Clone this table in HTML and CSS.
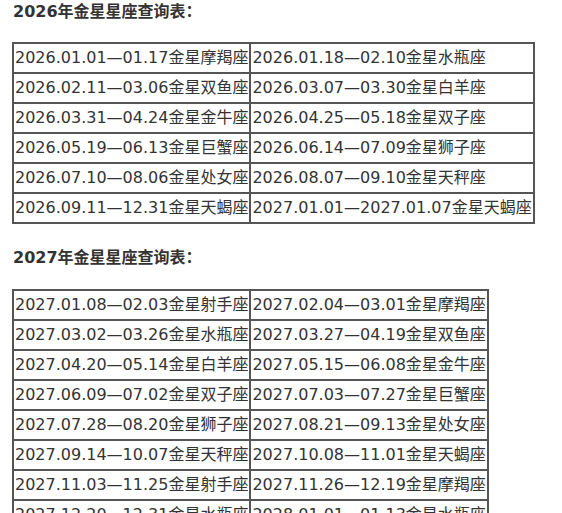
FILE: index.html
```html
<!DOCTYPE html>
<html lang="zh">
<head>
<meta charset="utf-8">
<link rel="stylesheet" href="styles.css">
</head>
<body>
<div class="page">
  <h3 class="title">2026年金星星座查询表：</h3>
  <table class="tbl">
    <tr><td>2026.01.01—01.17金星摩羯座</td><td>2026.01.18—02.10金星水瓶座</td></tr>
    <tr><td>2026.02.11—03.06金星双鱼座</td><td>2026.03.07—03.30金星白羊座</td></tr>
    <tr><td>2026.03.31—04.24金星金牛座</td><td>2026.04.25—05.18金星双子座</td></tr>
    <tr><td>2026.05.19—06.13金星巨蟹座</td><td>2026.06.14—07.09金星狮子座</td></tr>
    <tr><td>2026.07.10—08.06金星处女座</td><td>2026.08.07—09.10金星天秤座</td></tr>
    <tr><td>2026.09.11—12.31金星天蝎座</td><td>2027.01.01—2027.01.07金星天蝎座</td></tr>
  </table>
  <h3 class="title second">2027年金星星座查询表：</h3>
  <table class="tbl">
    <tr><td>2027.01.08—02.03金星射手座</td><td>2027.02.04—03.01金星摩羯座</td></tr>
    <tr><td>2027.03.02—03.26金星水瓶座</td><td>2027.03.27—04.19金星双鱼座</td></tr>
    <tr><td>2027.04.20—05.14金星白羊座</td><td>2027.05.15—06.08金星金牛座</td></tr>
    <tr><td>2027.06.09—07.02金星双子座</td><td>2027.07.03—07.27金星巨蟹座</td></tr>
    <tr><td>2027.07.28—08.20金星狮子座</td><td>2027.08.21—09.13金星处女座</td></tr>
    <tr><td>2027.09.14—10.07金星天秤座</td><td>2027.10.08—11.01金星天蝎座</td></tr>
    <tr><td>2027.11.03—11.25金星射手座</td><td>2027.11.26—12.19金星摩羯座</td></tr>
    <tr><td>2027.12.20—12.31金星水瓶座</td><td>2028.01.01—01.13金星水瓶座</td></tr>
  </table>
</div>
</body>
</html>
```
FILE: styles.css
```css
html, body {
  margin: 0;
  padding: 0;
  background: #fff;
}
body {
  font-family: "DejaVu Sans", "Noto Sans CJK SC", sans-serif;
  color: #333;
  font-size: 16px;
}
.page {
  padding: 0 12px;
}
.title {
  margin: 0 0 18px 1px;
  font-size: 16px;
  line-height: 24px;
  font-weight: bold;
  color: #333;
}
.title.second {
  margin-top: 22px;
  margin-bottom: 19px;
}
.tbl {
  border-collapse: collapse;
  border: 2px solid #555;
}
.tbl td {
  border: 2px solid #555;
  padding: 0 1px;
  white-space: nowrap;
  line-height: 28px;
}
```
